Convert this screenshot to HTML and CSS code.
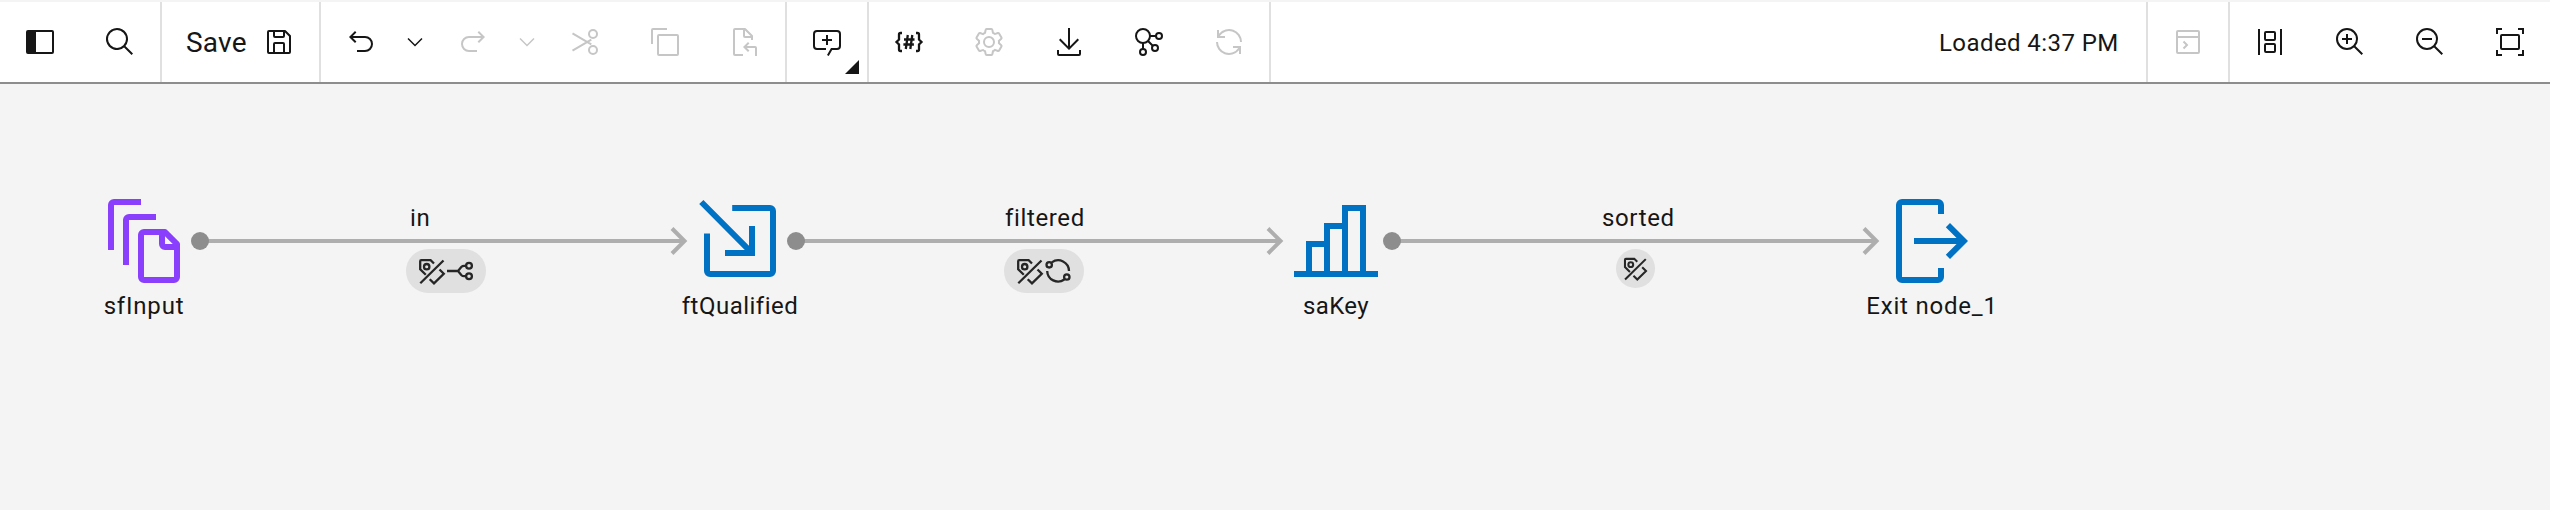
FILE: index.html
```
<!DOCTYPE html>
<html lang="en">
<head>
<meta charset="utf-8">
<title>Flow editor</title>
<link rel="stylesheet" href="styles.css">
</head>
<body>
<svg class="defs" width="0" height="0" aria-hidden="true">
  <symbol id="tag-off" viewBox="0 0 28 28">
    <g fill="none" stroke="#262626" stroke-width="2.300">
      <path d="M7.800 17.800L2.200 12.300V4.200Q2.200 3.200 3.200 3.200H12.600L16 6.500"/>
      <circle cx="8.700" cy="9.700" r="2.700"/>
      <path d="M2.300 26.300L25.500 3.500M21.500 12.500L25.800 16.800L16 26.400L11.700 22.200"/>
    </g>
  </symbol>
</svg>
<header class="toolbar">
  <button class="tool"><svg class="icon" viewBox="0 0 32 32"><path d="M28 4H4a2 2 0 0 0-2 2v20a2 2 0 0 0 2 2h24a2 2 0 0 0 2-2V6a2 2 0 0 0-2-2zm0 22H12V6h16z"/></svg></button>
  <button class="tool"><svg class="icon" viewBox="0 0 32 32"><path d="M29,27.5859l-7.5521-7.5521a11.0177,11.0177,0,1,0-1.4141,1.4141L27.5859,29ZM4,13a9,9,0,1,1,9,9A9.01,9.01,0,0,1,4,13Z"/></svg></button>
  <i class="divider"></i>
  <button class="tool save"><span class="save-text">Save</span><svg class="icon" viewBox="0 0 32 32"><path d="M27.71,9.29l-5-5A1,1,0,0,0,22,4H6A2,2,0,0,0,4,6V26a2,2,0,0,0,2,2H26a2,2,0,0,0,2-2V10A1,1,0,0,0,27.71,9.29ZM12,6h8v4H12Zm8,20H12V18h8Zm2,0V18a2,2,0,0,0-2-2H12a2,2,0,0,0-2,2v8H6V6h4v4a2,2,0,0,0,2,2h8a2,2,0,0,0,2-2V6.41l4,4V26Z"/></svg></button>
  <i class="divider"></i>
  <button class="tool"><svg class="icon" viewBox="0 0 32 32"><path d="M20,10H7.8149l3.5874-3.5859L10,5,4,11,10,17l1.4023-1.4146L7.8179,12H20a6,6,0,0,1,0,12H12v2h8a8,8,0,0,0,0-16Z"/></svg></button>
  <button class="tool chevron"><svg class="icon" viewBox="0 0 32 32"><path d="M16 22 6 12 7.400 10.600 16 19.200 24.600 10.600 26 12z"/></svg></button>
  <button class="tool off"><svg class="icon" viewBox="0 0 32 32"><path d="M12,10H24.1851L20.5977,6.4141,22,5,28,11,22,17l-1.4023-1.4146L24.1821,12H12a6,6,0,0,0,0,12h8v2H12a8,8,0,0,1,0-16Z"/></svg></button>
  <button class="tool chevron off"><svg class="icon" viewBox="0 0 32 32"><path d="M16 22 6 12 7.400 10.600 16 19.200 24.600 10.600 26 12z"/></svg></button>
  <button class="tool off"><svg class="icon line" viewBox="0 0 32 32"><circle cx="24" cy="8" r="4"/><circle cx="24" cy="24" r="4"/><path d="M3.500 7.470L22.300 18.400M3.500 24.550L22.300 13.600"/></svg></button>
  <button class="tool off"><svg class="icon" viewBox="0 0 32 32"><path d="M28,10V28H10V10H28m0-2H10a2,2,0,0,0-2,2V28a2,2,0,0,0,2,2H28a2,2,0,0,0,2-2V10a2,2,0,0,0-2-2ZM4,18H2V4A2,2,0,0,1,4,2H18V4H4Z"/></svg></button>
  <button class="tool off"><svg class="icon" viewBox="0 0 32 32"><path d="M26,20H17.83l2.58-2.59L19,16l-5,5,5,5,1.41-1.41L17.83,22H26v8h2V22A2,2,0,0,0,26,20ZM23.71,9.29l-7-7A1,1,0,0,0,16,2H6A2,2,0,0,0,4,4V28a2,2,0,0,0,2,2h8V28H6V4h8v6a2,2,0,0,0,2,2h6v2h2V10A1,1,0,0,0,23.71,9.29ZM16,4.410,21.590,10H16Z"/></svg></button>
  <i class="divider"></i>
  <button class="tool has-menu"><svg class="icon" viewBox="0 0 32 32"><path d="M17.74,30,16,29l4-7h6a2,2,0,0,0,2-2V8a2,2,0,0,0-2-2H6A2,2,0,0,0,4,8V20a2,2,0,0,0,2,2h9v2H6a4,4,0,0,1-4-4V8A4,4,0,0,1,6,4H26a4,4,0,0,1,4,4V20a4,4,0,0,1-4,4H21.16ZM17 9H15V13H11V15H15V19H17V15H21V13H17Z"/></svg></button>
  <i class="divider"></i>
  <button class="tool"><svg class="icon line bold" viewBox="0 0 32 32"><path d="M9 7H7.500Q6 7 6 8.500V13.500L3.500 16L6 18.500V23.500Q6 25 7.500 25H9M23 7H24.500Q26 7 26 8.500V13.500L28.500 16L26 18.500V23.500Q26 25 24.500 25H23M14.800 9L12.800 23M19.300 9L17.300 23M11 13.500H21.500M10.400 18.500H20.900"/></svg></button>
  <button class="tool off"><svg class="icon" viewBox="0 0 32 32"><path d="M27,16.76c0-.25,0-.5,0-.76s0-.51,0-.77l1.920-1.680A2,2,0,0,0,29.300,11L26.940,7a2,2,0,0,0-1.730-1,2,2,0,0,0-.64.100l-2.430.820a11.350,11.350,0,0,0-1.310-.75l-.51-2.520a2,2,0,0,0-2-1.610H13.640a2,2,0,0,0-2,1.610l-.51,2.520a11.480,11.480,0,0,0-1.320.75L7.430,6.060A2,2,0,0,0,6.790,6,2,2,0,0,0,5.060,7L2.700,11a2,2,0,0,0,.41,2.510L5,15.240c0,.25,0,.5,0,.76s0,.51,0,.77L3.110,18.450A2,2,0,0,0,2.700,21L5.060,25a2,2,0,0,0,1.730,1,2,2,0,0,0,.64-.1l2.430-.820a11.350,11.350,0,0,0,1.310.75l.51,2.520a2,2,0,0,0,2,1.610h4.720a2,2,0,0,0,2-1.610l.51-2.520a11.480,11.480,0,0,0,1.320-.75l2.420.820a2,2,0,0,0,.64.100,2,2,0,0,0,1.730-1L29.300,21a2,2,0,0,0-.41-2.510ZM25.210,24l-3.430-1.160a8.860,8.860,0,0,1-2.710,1.570L18.360,28H13.640l-.71-3.550a9.360,9.360,0,0,1-2.700-1.570L6.790,24,4.430,20l2.720-2.400a8.900,8.900,0,0,1,0-3.130L4.430,12,6.790,8l3.430,1.160a8.860,8.860,0,0,1,2.710-1.570L13.640,4h4.720l.71,3.550a9.360,9.360,0,0,1,2.700,1.570L25.210,8,27.570,12l-2.720,2.400a8.900,8.900,0,0,1,0,3.130L27.570,20ZM16,22a6,6,0,1,1,6-6A5.940,5.940,0,0,1,16,22Zm0-10a4,4,0,1,0,4,4A3.910,3.910,0,0,0,16,12Z"/></svg></button>
  <button class="tool"><svg class="icon" viewBox="0 0 32 32"><path d="M26 24v4H6v-4H4v4a2 2 0 0 0 2 2h20a2 2 0 0 0 2-2v-4zM26 14l-1.410-1.410L17 20.170V2h-2v18.170l-7.590-7.580L6 14l10 10z"/></svg></button>
  <button class="tool"><svg class="icon line" viewBox="0 0 32 32"><circle cx="10" cy="10" r="7"/><circle cx="26" cy="10" r="3"/><circle cx="22" cy="22" r="3"/><circle cx="10" cy="26" r="3"/><path d="M17 10H23M10 17V23M15 15L20 20"/></svg></button>
  <button class="tool off"><svg class="icon" viewBox="0 0 32 32"><path d="M12,10H6.780A11,11,0,0,1,27,16h2A13,13,0,0,0,6,7.680V4H4v8h8ZM20,22h5.220A11,11,0,0,1,5,16H3a13,13,0,0,0,23,8.320V28h2V20H20Z"/></svg></button>
  <i class="divider"></i>
  <span class="spacer"></span>
  <span class="status">Loaded 4:37 PM</span>
  <i class="divider"></i>
  <button class="tool off"><svg class="icon" viewBox="0 0 32 32"><path d="M26 4H6a2 2 0 0 0-2 2v20a2 2 0 0 0 2 2h20a2 2 0 0 0 2-2V6a2 2 0 0 0-2-2zm0 2v4H6V6zM6 26V12h20v14zM12.200 14.800L10.800 16.200L13.600 19L10.800 21.800L12.200 23.200L16.400 19z"/></svg></button>
  <i class="divider"></i>
  <button class="tool"><svg class="icon line" viewBox="0 0 32 32"><path d="M5 3V29M27 3V29"/><rect x="11" y="6" width="10" height="8" rx="1"/><rect x="11" y="18" width="10" height="8" rx="1"/></svg></button>
  <button class="tool"><svg class="icon" viewBox="0 0 32 32"><path d="M18 12H14V8H12V12H8V14H12V18H14V14H18ZM21.450 20A10.870 10.870 0 0 0 24 13 11 11 0 1 0 13 24a10.870 10.870 0 0 0 7-2.550L27.590 29 29 27.590ZM13 22a9 9 0 1 1 9-9A9 9 0 0 1 13 22Z"/></svg></button>
  <button class="tool"><svg class="icon" viewBox="0 0 32 32"><path d="M8 12H18V14H8ZM21.450 20A10.870 10.870 0 0 0 24 13 11 11 0 1 0 13 24a10.870 10.870 0 0 0 7-2.550L27.590 29 29 27.590ZM13 22a9 9 0 1 1 9-9A9 9 0 0 1 13 22Z"/></svg></button>
  <button class="tool"><svg class="icon line" viewBox="0 0 32 32"><path d="M3 8V3H8M24 3H29V8M29 24V29H24M8 29H3V24"/><rect x="7" y="9" width="18" height="14" rx="1"/></svg></button>
</header>

<main class="flow">
  <section class="node purple">
    <svg class="node-icon" viewBox="0 0 32 32"><path d="M4 19V4a2 2 0 0 1 2-2h9v2H6v15zM9 24V9a2 2 0 0 1 2-2h9v2h-9v15zM27.700 16.300l-4-4A1 1 0 0 0 23 12h-7a2 2 0 0 0-2 2v14a2 2 0 0 0 2 2h10a2 2 0 0 0 2-2V17a1 1 0 0 0-.3-.7zM26 28H16V14h5v3a2 2 0 0 0 2 2h3zM23 14.400L25.600 17H23z"/></svg>
    <span class="name n1">sfInput</span>
  </section>
  <section class="link">
    <span class="link-name l1">in</span>
    <svg class="wire" viewBox="0 0 500 28"><path d="M9 14H494M481 1.500L493.500 14L481 26.500"/><circle cx="9" cy="14" r="9"/></svg>
    <span class="pill"><svg class="badge" viewBox="0 0 28 28"><use href="#tag-off"/></svg><svg class="badge" viewBox="0 0 28 28"><g fill="none" stroke="#262626" stroke-width="2.300"><path d="M1 14H12M20 8.800H18Q16.500 8.800 15.500 9.800L12 14L15.500 18.200Q16.500 19.200 18 19.200H20"/><circle cx="23" cy="8.800" r="2.900"/><circle cx="23" cy="19.200" r="2.900"/></g></svg></span>
  </section>
  <section class="node">
    <svg class="node-icon" viewBox="0 0 32 32"><path d="M13.400 4H26a2 2 0 0 1 2 2v20a2 2 0 0 1-2 2H6a2 2 0 0 1-2-2V13.500h2V26H26V6H13.400zM3.800 2.300L19 17.600V11h2v10H11v-2h6.600L2.400 3.700z"/></svg>
    <span class="name n2">ftQualified</span>
  </section>
  <section class="link">
    <span class="link-name l2">filtered</span>
    <svg class="wire" viewBox="0 0 500 28"><path d="M9 14H494M481 1.500L493.500 14L481 26.500"/><circle cx="9" cy="14" r="9"/></svg>
    <span class="pill p2"><svg class="badge" viewBox="0 0 28 28"><use href="#tag-off"/></svg><svg class="badge" viewBox="0 0 28 28"><g fill="none" stroke="#262626" stroke-width="2.300"><circle cx="5.200" cy="7.800" r="2.700"/><circle cx="22.800" cy="20" r="2.700"/><path d="M7.800 5.400A10.800 10.800 0 0 1 25 14M3.200 14A10.800 10.800 0 0 0 20.300 22.500"/></g></svg></span>
  </section>
  <section class="node">
    <svg class="node-icon" viewBox="0 0 32 32"><path d="M26,26V4H18v6H12v6H6V26H2v2H30V26ZM8,26V18h4v8Zm6,0V12h4V26Zm6,0V6h4V26Z"/></svg>
    <span class="name n3">saKey</span>
  </section>
  <section class="link">
    <span class="link-name l3">sorted</span>
    <svg class="wire" viewBox="0 0 500 28"><path d="M9 14H494M481 1.500L493.500 14L481 26.500"/><circle cx="9" cy="14" r="9"/></svg>
    <span class="pill single"><svg class="badge" viewBox="0 0 28 28"><use href="#tag-off"/></svg></span>
  </section>
  <section class="node">
    <svg class="node-icon" viewBox="0 0 32 32"><path d="M18 30H6a2 2 0 0 1-2-2V4a2 2 0 0 1 2-2h12a2 2 0 0 1 2 2v3h-2V4H6v24h12v-3h2v3a2 2 0 0 1-2 2zM22 10l-1.400 1.400L24.200 15H10v2h14.200l-3.600 3.600L22 22l6-6z"/></svg>
    <span class="name n4">Exit node_1</span>
  </section>
</main>
</body>
</html>
```
FILE: styles.css
```
* { box-sizing: border-box; }
body {
  margin: 0;
  height: 510px;
  overflow: hidden;
  background: #f4f4f4;
  color: #161616;
  font-family: Roboto, "Liberation Sans", sans-serif;
  font-size: 24px;
}
.defs { position: absolute; }
.toolbar {
  display: flex;
  height: 84px;
  border-top: 2px solid #f4f4f4;
  border-bottom: 2px solid #8d8d8d;
  background: #fff;
}
.tool {
  display: flex;
  flex: none;
  align-items: center;
  justify-content: center;
  width: 80px;
  height: 80px;
  padding: 0;
  border: 0;
  background: none;
  color: #161616;
  font: inherit;
}
.off { color: #c6c6c6; }
.icon { display: block; flex: none; width: 32px; height: 32px; fill: currentColor; }
.line { fill: none; stroke: currentColor; stroke-width: 2; }
.bold { stroke-width: 2.3; }
.divider { flex: none; width: 2px; height: 80px; background: #e0e0e0; }
.save { width: 157px; justify-content: flex-start; padding-left: 24px; }
.save-text { width: 77px; text-align: left; font-size: 28px; letter-spacing: .2px; white-space: nowrap; }
.chevron { width: 32px; padding-right: 4px; }
.chevron .icon { width: 24px; height: 24px; }
.has-menu { position: relative; }
.has-menu::after {
  content: "";
  position: absolute;
  right: 8px;
  bottom: 8px;
  border-bottom: 14px solid #161616;
  border-left: 14px solid transparent;
}
.spacer { flex: 1; }
.status { width: 207px; line-height: 82px; letter-spacing: .42px; white-space: nowrap; }

.flow { display: flex; padding: 109px 0 0 96px; }
.node { display: flex; flex: none; flex-direction: column; align-items: center; width: 96px; color: #0072c3; }
.purple { color: #8a3ffc; }
.node-icon { display: block; flex: none; width: 96px; height: 96px; fill: currentColor; }
.name { margin-top: 1px; color: #161616; line-height: 32px; letter-spacing: .64px; white-space: nowrap; }
.n1, .n4 { letter-spacing: .8px; }
.n2 { letter-spacing: .5px; }
.n3 { letter-spacing: .4px; }
.link { display: flex; flex: none; flex-direction: column; width: 500px; height: 110px; padding-top: 13px; }
.link-name { align-self: flex-start; height: 21px; margin-left: 218px; line-height: 24px; letter-spacing: .64px; white-space: nowrap; }
.l2 { margin-left: 217px; }
.wire { display: block; flex: none; width: 500px; height: 28px; margin: 0 0 -6px -1px; overflow: visible; }
.wire path { fill: none; stroke: #aeaeae; stroke-width: 4; }
.wire circle { fill: #8d8d8d; }
.pill { display: flex; align-items: center; justify-content: center; width: 80px; height: 44px; margin-left: 214px; border-radius: 22px; background: #e0e0e0; }
.p2 { margin-left: 216px; }
.badge { display: block; flex: none; width: 28px; height: 28px; }
.single { width: 39px; height: 39px; margin-left: 232px; }
.single .badge { width: 25px; height: 25px; }
```
